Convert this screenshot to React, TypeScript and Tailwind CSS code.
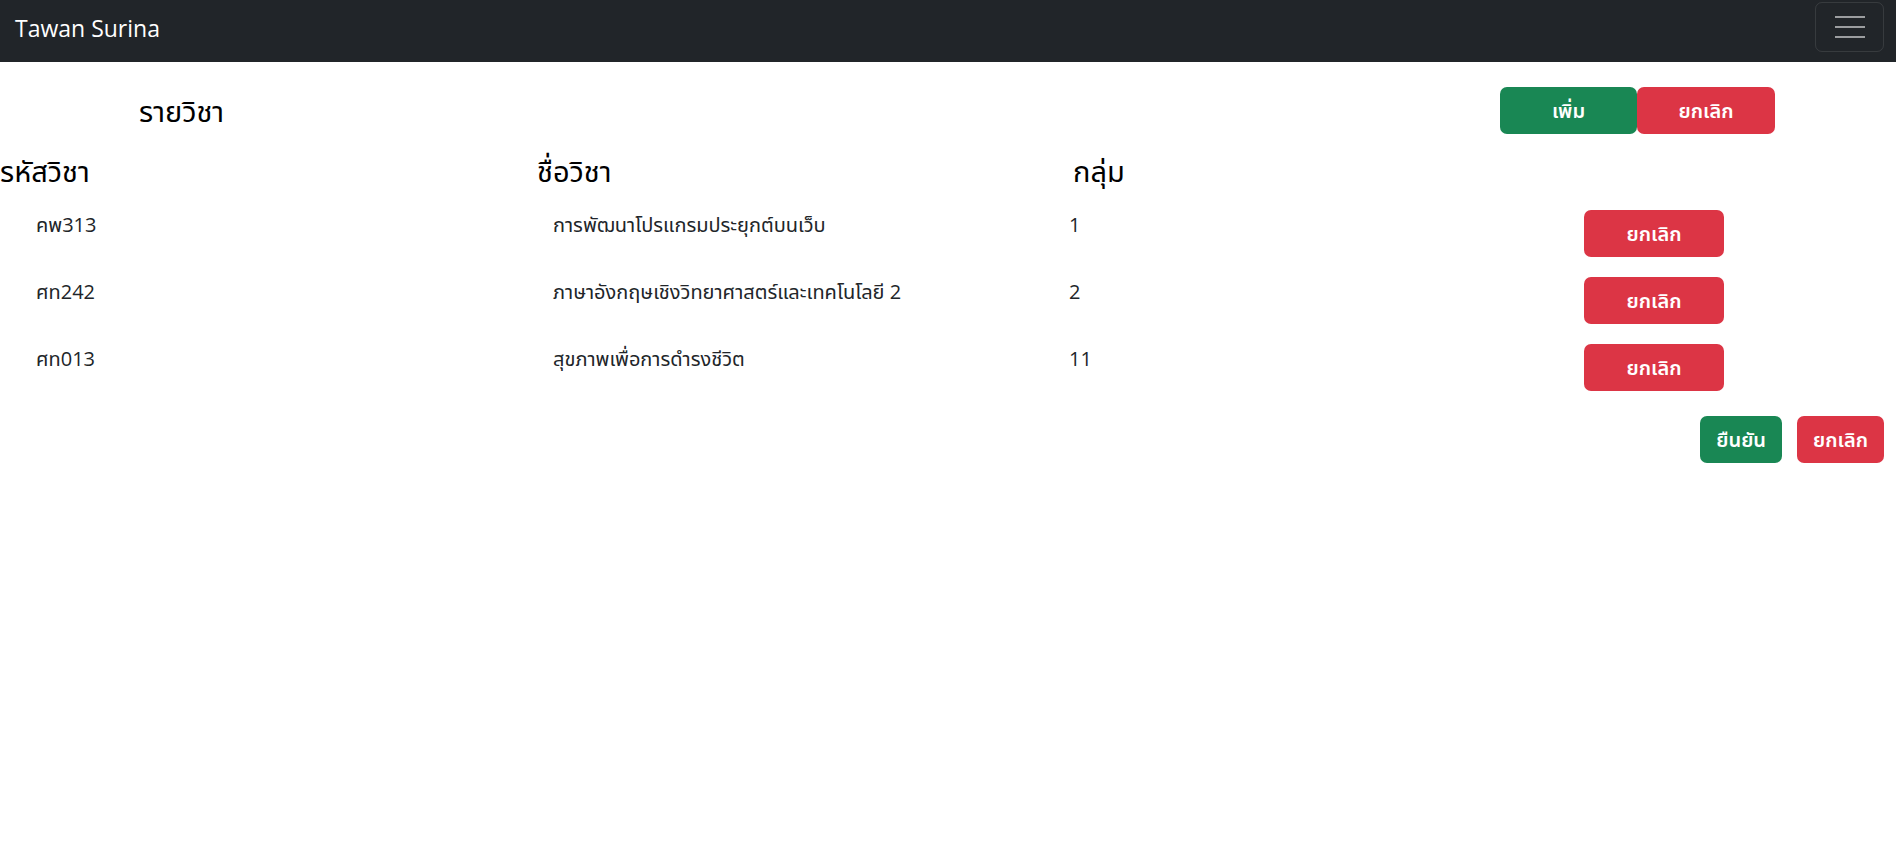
const rows = [
  { code: 'คพ313', name: 'การพัฒนาโปรแกรมประยุกต์บนเว็บ', group: '1' },
  { code: 'ศท242', name: 'ภาษาอังกฤษเชิงวิทยาศาสตร์และเทคโนโลยี 2', group: '2' },
  { code: 'ศท013', name: 'สุขภาพเพื่อการดำรงชีวิต', group: '11' },
];

const font = { fontFamily: '"Open Sans", "Noto Sans", "Noto Sans Thai", sans-serif' };

export default function App() {
  return (
    <div className="min-h-[852px] bg-white text-[#212529]" style={font}>
      {/* Navbar */}
      <nav className="h-[62px] bg-[#212529] flex items-start justify-between">
        <span className="ml-[15px] mt-[11px] text-[23px] leading-[35px] text-white">Tawan Surina</span>
        <button
          type="button"
          className="mr-[12px] mt-[2px] w-[69px] h-[50px] rounded-[7px] border border-white/10 flex flex-col items-center justify-center gap-[8px]"
        >
          <span className="block w-[30px] h-[2px] bg-white/55" />
          <span className="block w-[30px] h-[2px] bg-white/55" />
          <span className="block w-[30px] h-[2px] bg-white/55" />
        </button>
      </nav>

      {/* Title row */}
      <div className="mt-[25px] flex items-center">
        <h4 className="pl-[139px] text-[29px] leading-[34px] text-black">รายวิชา</h4>
        <div className="ml-auto mr-[121px] flex">
          <button className="w-[137px] h-[47px] rounded-[7px] bg-[#198754] text-white text-[20px] font-semibold">เพิ่ม</button>
          <button className="w-[138px] h-[47px] rounded-[7px] bg-[#dc3545] text-white text-[20px] font-semibold">ยกเลิก</button>
        </div>
      </div>

      {/* Header */}
      <div className="mt-[18px] grid grid-cols-[537px_536px_1fr] text-[29px] leading-[38px] text-black">
        <div>รหัสวิชา</div>
        <div>ชื่อวิชา</div>
        <div>กลุ่ม</div>
      </div>

      {/* Rows */}
      <div className="mt-[20px] flex flex-col gap-[20px]">
        {rows.map((r) => (
          <div key={r.code} className="grid grid-cols-[553px_516px_515px_140px] items-start text-[20px] leading-[30px]">
            <div className="pl-[36px]">{r.code}</div>
            <div>{r.name}</div>
            <div>{r.group}</div>
            <button className="h-[47px] rounded-[7px] bg-[#dc3545] text-white text-[20px] font-semibold">ยกเลิก</button>
          </div>
        ))}
      </div>

      {/* Footer buttons */}
      <div className="mt-[25px] flex justify-end gap-[15px] pr-[12px]">
        <button className="px-[16px] h-[47px] rounded-[7px] bg-[#198754] text-white text-[20px] font-semibold">ยืนยัน</button>
        <button className="px-[16px] h-[47px] rounded-[7px] bg-[#dc3545] text-white text-[20px] font-semibold">ยกเลิก</button>
      </div>
    </div>
  );
}
